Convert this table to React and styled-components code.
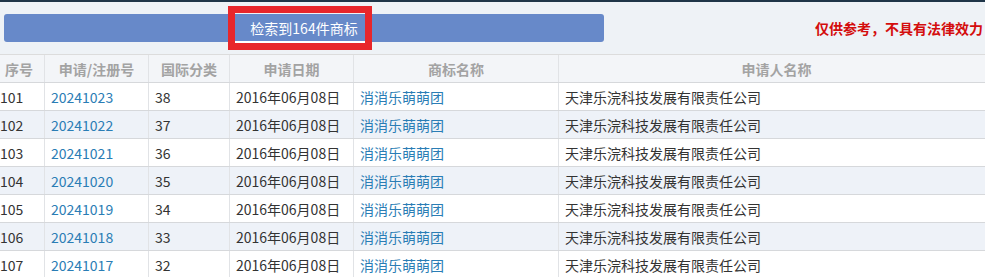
import React from 'react';
import styled, { createGlobalStyle } from 'styled-components';

const rows = [
  { no: '101', reg: '20241023', cls: '38' },
  { no: '102', reg: '20241022', cls: '37' },
  { no: '103', reg: '20241021', cls: '36' },
  { no: '104', reg: '20241020', cls: '35' },
  { no: '105', reg: '20241019', cls: '34' },
  { no: '106', reg: '20241018', cls: '33' },
  { no: '107', reg: '20241017', cls: '32' },
];

const columns = '50px 104px 81px 124px 205px 436px';

const App = () => (
  <Page>
    <GlobalStyle />
    <TopLine />
    <Toolbar>
      <ResultBar>
        <ResultText>检索到164件商标</ResultText>
        <Highlight />
      </ResultBar>
      <Notice>仅供参考，不具有法律效力</Notice>
    </Toolbar>
    <Table>
      <HeadRow>
        <HeadCell>序号</HeadCell>
        <HeadCell>申请/注册号</HeadCell>
        <HeadCell>国际分类</HeadCell>
        <HeadCell>申请日期</HeadCell>
        <HeadCell>商标名称</HeadCell>
        <HeadCell>申请人名称</HeadCell>
      </HeadRow>
      {rows.map((r, i) => (
        <Row key={r.no} striped={i % 2 === 1}>
          <Cell>{r.no}</Cell>
          <Cell link>{r.reg}</Cell>
          <Cell>{r.cls}</Cell>
          <Cell>2016年06月08日</Cell>
          <Cell link>消消乐萌萌团</Cell>
          <Cell>天津乐浣科技发展有限责任公司</Cell>
        </Row>
      ))}
    </Table>
  </Page>
);

const GlobalStyle = createGlobalStyle`
  body {
    margin: 0;
    overflow: hidden;
    background: #eef2f6;
    font-family: "Noto Sans CJK SC", "Noto Sans", sans-serif;
  }
`;

const Page = styled.div`
  width: 985px;
  height: 277px;
  overflow: hidden;
  background: #eef2f6;
`;

const TopLine = styled.div`
  height: 2px;
  background: #1f3548;
`;

const Toolbar = styled.div`
  height: 52px;
  display: flex;
  align-items: center;
  justify-content: space-between;
  padding: 0 2px 0 4px;
  box-sizing: border-box;
`;

const ResultBar = styled.div`
  position: relative;
  width: 600px;
  height: 28px;
  border-radius: 3px;
  background: #6789c9;
  display: flex;
  align-items: center;
  justify-content: center;
`;

const ResultText = styled.span`
  color: #fff;
  font-size: 14px;
  line-height: 28px;
`;

const Highlight = styled.div`
  position: absolute;
  left: 224px;
  top: -8px;
  width: 144px;
  height: 44px;
  box-sizing: border-box;
  border: 7px solid #e8262b;

  &::after {
    content: '';
    position: absolute;
    left: 0;
    right: 0;
    bottom: 0;
    height: 2px;
    background: #fff;
  }
`;

const Notice = styled.div`
  color: #d40d0d;
  font-size: 14px;
  font-weight: 700;
  line-height: 20px;
`;

const Table = styled.div`
  width: 1000px;
  margin-left: -6px;
  border-top: 1px solid #dcdcdc;
`;

const Row = styled.div`
  display: grid;
  grid-template-columns: ${columns};
  height: 28px;
  box-sizing: border-box;
  border-bottom: 1px solid #d6d8db;
  background: ${p => (p.striped ? '#eef2f8' : '#fff')};
`;

const HeadRow = styled(Row)`
  background: #f3f5f8;
`;

const Cell = styled.div`
  display: flex;
  align-items: center;
  padding: 0 5px 0 6px;
  border-left: 1px solid #e1e3e6;
  font-size: 14px;
  line-height: 20px;
  white-space: nowrap;
  overflow: hidden;
  color: ${p => (p.link ? '#2a7db5' : '#333')};

  &:first-child {
    border-left: none;
  }
`;

const HeadCell = styled(Cell)`
  justify-content: center;
  padding: 0;
  color: #a3a3a3;
  font-weight: 700;
`;

export default App;
